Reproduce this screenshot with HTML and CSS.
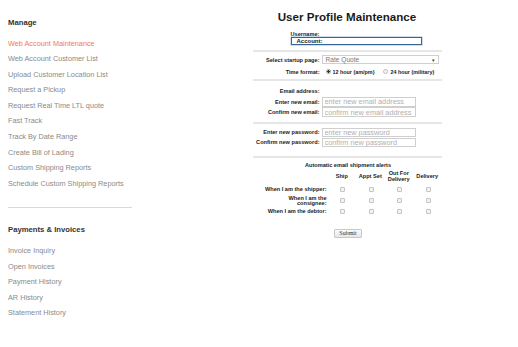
FILE: index.html
```html
<!DOCTYPE html>
<html lang="en">
<head>
    <meta charset="UTF-8">
    <meta name="viewport" content="width=device-width, initial-scale=1.0">
    <title>User Profile Maintenance</title>
    <link rel="stylesheet" href="styles.css">
</head>
<body>
    <div class="page">
        <aside class="sidebar">
            <h3 class="nav-title">Manage</h3>
            <ul class="nav-list main-links">
                <li><a class="active" href="#">Web Account Maintenance</a></li>
                <li><a href="#">Web Account Customer List</a></li>
                <li><a href="#">Upload Customer Location List</a></li>
                <li><a href="#">Request a Pickup</a></li>
                <li><a href="#">Request Real Time LTL quote</a></li>
                <li><a href="#">Fast Track</a></li>
                <li><a href="#">Track By Date Range</a></li>
                <li><a href="#">Create Bill of Lading</a></li>
                <li><a href="#">Custom Shipping Reports</a></li>
                <li><a href="#">Schedule Custom Shipping Reports</a></li>
            </ul>
            <div class="nav-divider"></div>
            <h3 class="nav-title payments">Payments &amp; Invoices</h3>
            <ul class="nav-list">
                <li><a href="#">Invoice Inquiry</a></li>
                <li><a href="#">Open Invoices</a></li>
                <li><a href="#">Payment History</a></li>
                <li><a href="#">AR History</a></li>
                <li><a href="#">Statement History</a></li>
            </ul>
        </aside>

        <main class="main">
            <form class="profile">
                <h1>User Profile Maintenance</h1>

                <div class="username">
                    <label>Username:</label>
                    <div class="account-box">Account:</div>
                </div>

                <div class="rule"></div>

                <div class="form-grid settings">
                    <label>Select startup page:</label>
                    <div class="select-box">
                        <span>Rate Quote</span>
                        <span class="arrow">&#9662;</span>
                    </div>
                    <label>Time format:</label>
                    <div class="radios">
                        <label class="radio"><input type="radio" name="time" checked>12 hour (am/pm)</label>
                        <label class="radio"><input type="radio" name="time">24 hour (military)</label>
                    </div>
                </div>

                <div class="rule rule-email"></div>

                <div class="form-grid email">
                    <label>Email address:</label>
                    <span></span>
                    <label>Enter new email:</label>
                    <input type="text" placeholder="enter new email address">
                    <label>Confirm new email:</label>
                    <input type="text" placeholder="confirm new email address">
                </div>

                <div class="rule rule-password"></div>

                <div class="form-grid password">
                    <label>Enter new password:</label>
                    <input type="password" placeholder="enter new password">
                    <label>Confirm new password:</label>
                    <input type="password" placeholder="confirm new password">
                </div>

                <div class="rule rule-alerts"></div>

                <div class="alerts-title">Automatic email shipment alerts</div>
                <div class="alerts">
                    <span></span>
                    <span class="col-head">Ship</span>
                    <span class="col-head">Appt Set</span>
                    <span class="col-head">Out For<br>Delivery</span>
                    <span class="col-head">Delivery</span>

                    <span class="row-label">When I am the shipper:</span>
                    <input type="checkbox"><input type="checkbox"><input type="checkbox"><input type="checkbox">

                    <span class="row-label">When I am the<br>consignee:</span>
                    <input type="checkbox"><input type="checkbox"><input type="checkbox"><input type="checkbox">

                    <span class="row-label">When I am the debtor:</span>
                    <input type="checkbox"><input type="checkbox"><input type="checkbox"><input type="checkbox">
                </div>

                <div class="actions">
                    <button type="button" class="submit">Submit</button>
                </div>
            </form>
        </main>
    </div>
</body>
</html>
```

FILE: styles.css
```css
:root {
    --orange: #f37a45;
    --divider: #f8cfb8;
    --nav-text: #8a8a8a;
    --heading: #333333;
    --label: #222222;
    --rule: #e6e6e6;
    --field-border: #cfcfcf;
    --placeholder: #b0b0b0;
}

* {
    margin: 0;
    padding: 0;
    box-sizing: border-box;
}

body {
    font-family: "Liberation Sans", Arial, sans-serif;
    background: #ffffff;
    color: var(--label);
}

.page {
    display: flex;
    min-height: 100vh;
}

/* sidebar */

.sidebar {
    width: 176px;
    flex-shrink: 0;
    padding: 15px 0 0 8px;
}

.nav-title {
    font-size: 7.7px;
    font-weight: 700;
    line-height: 15.5px;
    color: var(--heading);
    margin-bottom: 5px;
}

.nav-title.payments {
    margin-bottom: 5.9px;
}

.nav-list {
    list-style: none;
}

.nav-list li {
    font-size: 7.3px;
    line-height: 15.5px;
}

.main-links li {
    line-height: 15.6px;
}

.nav-list a {
    color: var(--nav-text);
    text-decoration: none;
}

.nav-list a.active {
    color: var(--orange);
}

.nav-divider {
    width: 124px;
    height: 1px;
    background: var(--divider);
    margin: 15.9px 0 13.3px;
}

/* main form */

.main {
    flex: 1;
}

.profile {
    width: 189px;
    margin: 0 auto;
}

h1 {
    font-size: 11.6px;
    font-weight: 700;
    line-height: 14px;
    color: #1a1a1a;
    text-align: center;
    margin-top: 10px;
}

label,
.row-label,
.col-head,
.alerts-title {
    font-size: 5.6px;
    font-weight: 700;
    color: var(--label);
}

.username {
    margin: 7px 0 0 38px;
}

.username label {
    display: block;
    line-height: 6px;
}

.account-box {
    width: 131px;
    height: 8px;
    border: 1px solid #3a6493;
    box-shadow: 0 0 0 0.5px #9fb8d6;
    padding-left: 5px;
    font-size: 6px;
    font-weight: 700;
    line-height: 6px;
}

.rule {
    height: 2px;
    background: var(--rule);
    margin-top: 5px;
}

.rule-email {
    margin-top: 3px;
}

.rule-password {
    margin-top: 4.5px;
}

.rule-alerts {
    margin-top: 9.5px;
}

.form-grid {
    display: grid;
    grid-template-columns: 67px 1fr;
    column-gap: 2px;
    align-items: center;
}

.form-grid > label {
    text-align: right;
    white-space: nowrap;
}

.settings {
    margin-top: 3px;
    grid-auto-rows: 9px;
    row-gap: 3px;
}

.email {
    margin-top: 5px;
    grid-auto-rows: 10px;
    row-gap: 0.5px;
}

.password {
    margin-top: 4px;
    grid-auto-rows: 9px;
    row-gap: 1px;
}

.select-box {
    display: flex;
    justify-content: space-between;
    align-items: center;
    width: 117px;
    height: 9px;
    border: 1px solid var(--field-border);
    padding: 0 3px;
    font-size: 6.6px;
    color: #777777;
}

.select-box .arrow {
    font-size: 5px;
    color: #333333;
}

.radios {
    display: flex;
    gap: 9px;
    padding-left: 4px;
}

.radio {
    display: flex;
    align-items: center;
    gap: 2px;
    font-size: 5.4px;
}

.radio input {
    appearance: none;
    width: 5px;
    height: 5px;
    border: 1px solid #bdbdbd;
    border-radius: 50%;
    background: #f4f4f4;
}

.radio input:checked {
    background: radial-gradient(circle, #333333 0 1.2px, #f4f4f4 1.4px);
    border-color: #9a9a9a;
}

.form-grid input[type="text"],
.form-grid input[type="password"] {
    width: 94px;
    height: 100%;
    border: 1px solid var(--field-border);
    padding-left: 2px;
    font-family: "Liberation Sans", Arial, sans-serif;
    font-size: 7.3px;
    outline: none;
}

.form-grid input::placeholder {
    color: var(--placeholder);
}

/* alerts */

.alerts-title {
    text-align: center;
    line-height: 6px;
    margin-top: 3.7px;
    padding-left: 2px;
}

.alerts {
    display: grid;
    grid-template-columns: 75px repeat(4, 28.5px);
    grid-template-rows: 15px repeat(3, 11px);
    align-items: center;
    justify-items: center;
    margin-top: 1.8px;
}

.col-head {
    text-align: center;
    line-height: 5.5px;
}

.row-label {
    justify-self: end;
    text-align: right;
    line-height: 5px;
    padding-right: 1px;
}

.alerts input[type="checkbox"] {
    appearance: none;
    width: 5px;
    height: 5px;
    border: 1px solid #c4c4c4;
    border-radius: 1px;
    background: #f3f3f3;
    margin-left: 2px;
}

.actions {
    display: flex;
    justify-content: center;
    margin-top: 11.2px;
    padding-left: 2px;
}

.submit {
    width: 28px;
    height: 9px;
    border: 1px solid #c8c8c8;
    border-radius: 1px;
    background: linear-gradient(#fbfbfb, #e6e6e6);
    font-family: "Liberation Serif", "Times New Roman", serif;
    font-size: 6px;
    line-height: 7px;
    color: #333333;
}
```
